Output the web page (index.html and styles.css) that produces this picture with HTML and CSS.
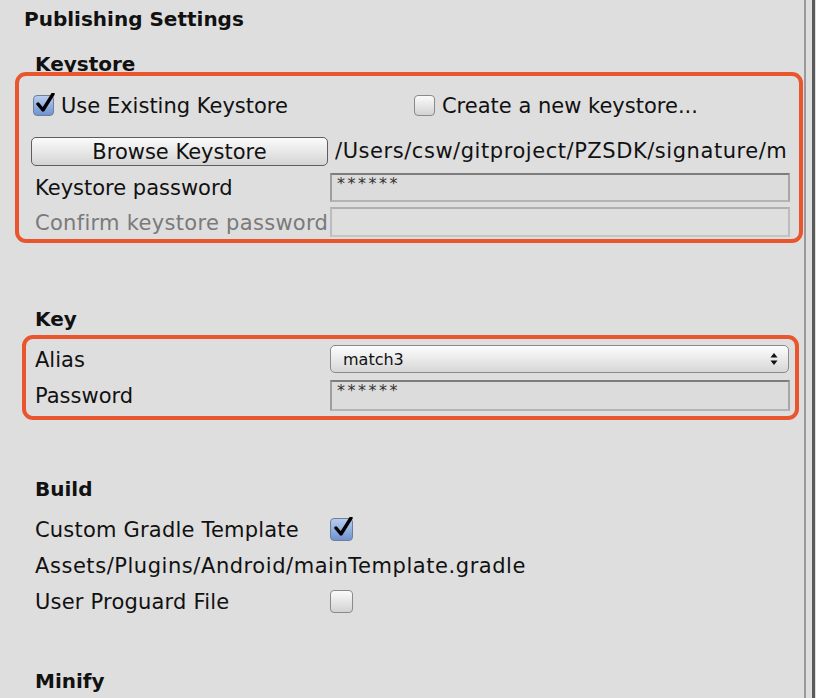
FILE: index.html
```html
<!DOCTYPE html>
<html>
<head>
<meta charset="utf-8">
<link rel="stylesheet" href="styles.css">
</head>
<body>
<div class="page">
  <div class="content">
    <div class="title">Publishing Settings</div>

    <div class="heading h-keystore">Keystore</div>
    <div class="box box1">
      <div class="row r1">
        <label class="check">
          <span class="cb on"><svg viewBox="0 0 22 22" width="22" height="22"><path d="M4 11 L9 17 L19 1" fill="none" stroke="#000" stroke-width="3.4" stroke-linecap="round" stroke-linejoin="round"/></svg></span>
          <span>Use Existing Keystore</span>
        </label>
        <label class="check c2">
          <span class="cb"></span>
          <span>Create a new keystore...</span>
        </label>
      </div>
      <div class="row r2">
        <div class="btn">Browse Keystore</div>
        <div class="path">/Users/csw/gitproject/PZSDK/signature/m</div>
      </div>
      <div class="row r3">
        <div class="label">Keystore password</div>
        <div class="field">******</div>
      </div>
      <div class="row r4">
        <div class="label dim">Confirm keystore password</div>
        <div class="field disabled"></div>
      </div>
    </div>

    <div class="heading h-key">Key</div>
    <div class="box box2">
      <div class="row">
        <div class="label">Alias</div>
        <div class="select">
          <span>match3</span>
          <svg class="arrows" viewBox="0 0 8 12" width="8" height="12"><path d="M4 0 L7.5 4.5 L0.5 4.5 Z M4 12 L7.5 7.5 L0.5 7.5 Z" fill="#111"/></svg>
        </div>
      </div>
      <div class="row">
        <div class="label">Password</div>
        <div class="field f2">******</div>
      </div>
    </div>

    <div class="heading h-build">Build</div>
    <div class="list">
      <div class="row">
        <div class="label">Custom Gradle Template</div>
        <span class="cb on big"><svg viewBox="0 0 22 22" width="22" height="22"><path d="M4 11 L9 17 L19 1" fill="none" stroke="#000" stroke-width="3.4" stroke-linecap="round" stroke-linejoin="round"/></svg></span>
      </div>
      <div class="row">
        <div class="label assets">Assets/Plugins/Android/mainTemplate.gradle</div>
      </div>
      <div class="row">
        <div class="label">User Proguard File</div>
        <span class="cb big"></span>
      </div>
    </div>

    <div class="heading h-minify">Minify</div>
  </div>
  <div class="track"></div>
</div>
</body>
</html>
```

FILE: styles.css
```css
html, body {
  margin: 0;
  padding: 0;
  background: #dedede;
}
body {
  font-family: "DejaVu Sans", "Noto Sans", sans-serif;
  font-size: 21px;
  color: #111;
  width: 816px;
  height: 698px;
  overflow: hidden;
}
.page {
  display: flex;
  height: 698px;
}
.content {
  width: 804px;
  flex: none;
}
.track {
  width: 6px;
  border-left: 2px solid #9a9a9a;
  border-right: 3px solid #5a5a5a;
  flex: none;
}
.title {
  font-weight: bold;
  font-size: 20px;
  height: 38px;
  line-height: 38px;
  padding-left: 24px;
}
.heading {
  font-weight: bold;
  font-size: 20px;
  height: 38px;
  line-height: 38px;
  padding-left: 35px;
}
.h-keystore { margin-top: 7px; }
.box {
  position: relative;
  border: 4px solid #e9552d;
  border-radius: 11px;
  box-sizing: border-box;
}
.box1 {
  margin-left: 15px;
  width: 788px;
  margin-top: -11px;
  padding: 11px 9px 0 16px;
  height: 171px;
}
.row {
  display: flex;
  align-items: center;
  height: 36px;
  white-space: nowrap;
}
.label {
  width: 295px;
  flex: none;
  position: relative;
  top: 1px;
}
.check span:last-child {
  position: relative;
  top: 1px;
}
.dim { color: #7a7a7a; letter-spacing: 0.3px; }
.check {
  display: flex;
  align-items: center;
}
.check .cb { margin-left: -2px; margin-right: 7px; }
.c2 { margin-left: 128px; }
.cb {
  width: 21px;
  height: 21px;
  box-sizing: border-box;
  border: 1px solid #8a8a8a;
  border-radius: 4px;
  background: linear-gradient(#fbfbfb, #d2d2d2);
  display: inline-flex;
  position: relative;
  flex: none;
}
.cb.on {
  background: linear-gradient(#b8cdee, #6f93d0);
  border-color: #6d7f9c;
}
.cb svg {
  position: absolute;
  left: 0;
  top: -3px;
}
.cb.big {
  width: 23px;
  height: 23px;
}
.cb.big svg { left: 1px; top: -2px; }
.r2 {
  height: 46px;
  align-items: flex-end;
}
.btn {
  margin-left: -4px;
  margin-bottom: 3px;
  width: 297px;
  height: 29px;
  box-sizing: border-box;
  border: 1px solid #5e5e5e;
  border-radius: 5px;
  background: linear-gradient(#fbfbfb, #d4d4d4);
  text-align: center;
  line-height: 28px;
  flex: none;
}
.path {
  margin-left: 7px;
  margin-bottom: 3px;
  width: 451px;
  overflow: hidden;
  line-height: 30px;
  letter-spacing: 0.55px;
}
.field {
  width: 460px;
  height: 29px;
  box-sizing: border-box;
  border-style: solid;
  border-width: 2px;
  border-color: #7d7d7d #a6a6a6 #b4b4b4 #9e9e9e;
  background: #dcdcdc;
  font-size: 16px;
  letter-spacing: 2.5px;
  line-height: 16px;
  padding: 1px 0 0 5px;
  color: #333;
  flex: none;
}
.r4 { height: 34px; }
.field.disabled {
  height: 30px;
  border-color: #b0b0b0 #bcbcbc #c4c4c4 #bcbcbc;
  background: #dedede;
}
.h-key { margin-top: 57px; }
.box2 {
  margin-left: 22px;
  width: 777px;
  margin-top: -3px;
  height: 85px;
  padding: 2px 5px 0 9px;
}
.select {
  width: 459px;
  height: 28px;
  box-sizing: border-box;
  border: 1px solid #8a8a8a;
  border-radius: 5px;
  background: linear-gradient(#fdfdfd, #d6d6d6);
  display: flex;
  align-items: center;
  justify-content: space-between;
  padding: 0 10px 0 12px;
  font-size: 16px;
  flex: none;
}
.f2 { height: 31px; }
.h-build { margin-top: 50px; }
.list {
  margin-top: 3px;
  padding-left: 35px;
}
.list .label { letter-spacing: 0.2px; }
.list .label.assets { letter-spacing: 0.55px; width: auto; }
.h-minify { margin-top: 43px; }
```
